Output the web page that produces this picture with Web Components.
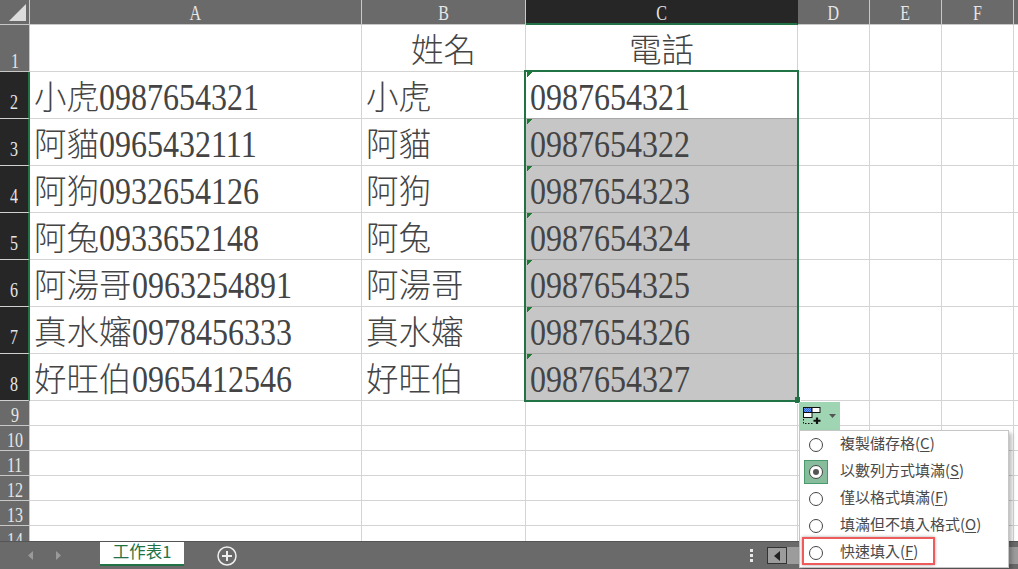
<!DOCTYPE html>
<html>
<head>
<meta charset="utf-8">
<style>
  html, body { margin: 0; height: 100%; overflow: hidden; }
</style>
</head>
<body>
<excel-window></excel-window>

<script>
const SERIF = `"Liberation Serif", "Noto Sans CJK TC", serif`;
const COLS = [
  { name: "A", width: 332 },
  { name: "B", width: 164 },
  { name: "C", width: 272, on: true },
  { name: "D", width: 72 },
  { name: "E", width: 72 },
  { name: "F", width: 72 },
  { name: "", width: 20 }
];
const ROWS = [
  ["", "姓名", "電話"],
  ["小虎0987654321", "小虎", "0987654321"],
  ["阿貓0965432111", "阿貓", "0987654322"],
  ["阿狗0932654126", "阿狗", "0987654323"],
  ["阿兔0933652148", "阿兔", "0987654324"],
  ["阿湯哥0963254891", "阿湯哥", "0987654325"],
  ["真水嬸0978456333", "真水嬸", "0987654326"],
  ["好旺伯0965412546", "好旺伯", "0987654327"]
];

// digits are taller and narrower in the reference, so squeeze them
const digits = s => s.replace(/\d+/, m => `<span class="dg" style="width:${m.length * 16}px">${m}</span>`);

class SheetGrid extends HTMLElement {
  connectedCallback() {
    this.attachShadow({ mode: "open" });
    let html = `<div class="hd corner"><svg width="29" height="24" viewBox="0 0 29 24"><path d="M26 4V21H9Z" fill="#dcdcdc"/></svg></div>`;
    COLS.forEach(c => {
      html += `<div class="hd col ${c.on ? "on" : ""}"><span>${c.name}</span></div>`;
    });
    for (let r = 1; r <= 14; r++) {
      const data = ROWS[r - 1];
      const on = r >= 2 && r <= 8;
      html += `<div class="hd num ${on ? "on" : ""}"><span>${r}</span></div>`;
      COLS.forEach((c, i) => {
        let cls = "cell";
        const txt = data && data[i] ? data[i] : "";
        if (r == 1 && i > 0 && i < 3) cls += " mid";
        if (i == 2 && on) cls += " tri";
        if (i == 2 && r >= 2 && on) cls += " line";
        if (i == 2 && r > 2 && on) cls += " gray";
        html += `<div class="${cls}">${digits(txt)}</div>`;
      });
    }
    this.shadowRoot.innerHTML = `
      <style>
        :host { display: block; position: relative; flex: 1; overflow: hidden; background: #fff; }
        .grid {
          display: grid;
          grid-template-columns: 30px ${COLS.map(c => c.width + "px").join(" ")};
          grid-template-rows: 25px repeat(8, 47px) repeat(6, 25px);
          font-family: ${SERIF};
        }
        .hd {
          box-sizing: border-box;
          background: #6a6a6a;
          color: #e6e6e6;
          font-size: 20px;
          line-height: 20px;
          display: flex;
          justify-content: center;
          align-items: flex-end;
          border-right: 1px solid #c8c8c8;
          border-bottom: 1px solid #c8c8c8;
          padding-bottom: 0;
        }
        .hd span { display: inline-block; transform: scaleX(.8); }
        .corner { padding: 0; display: block; }
        .corner svg { display: block; }
        .col { align-items: center; padding: 2px 0 0; }
        .col.on { background: #262626; border-right-color: #262626; border-bottom: 2px solid #217346; }
        .num.on { background: #262626; border-right: 2px solid #217346; border-bottom-color: #d0d0d0; padding-bottom: 6px; }
        .cell {
          box-sizing: border-box;
          border-right: 1px solid #d4d4d4;
          border-bottom: 1px solid #d4d4d4;
          font-size: 32.5px;
          font-weight: 300;
          line-height: 40px;
          color: #444;
          padding: 0 4px 0 4px;
          display: flex;
          align-items: flex-end;
          white-space: nowrap;
          overflow: hidden;
        }
        .dg {
          display: inline-block;
          font-size: 37px;
          transform: scaleX(.865);
          transform-origin: left center;
        }
        .mid { justify-content: center; }
        .tri { background: linear-gradient(135deg, #1e7b34 0 3.6px, transparent 3.6px) 1px 0 / 6px 6px no-repeat; }
        .line { border-bottom-color: #a8a8a8; }
        .gray {
          background: linear-gradient(135deg, #1e7b34 0 3.6px, transparent 3.6px) 1px 0 / 6px 6px no-repeat, #c6c6c6;
          border-right-color: #fff;
        }
        .sel {
          position: absolute;
          left: 524px;
          top: 70px;
          width: 275px;
          height: 332px;
          box-sizing: border-box;
          border: 2px solid #217346;
        }
        .handle {
          position: absolute;
          left: 795px;
          top: 397px;
          width: 5px;
          height: 6px;
          background: #217346;
          box-shadow: 1px 1px 0 #fff;
        }
      </style>
      <div class="grid">${html}</div>
      <div class="sel"></div>
      <div class="handle"></div>`;
  }
}

class FillMenu extends HTMLElement {
  connectedCallback() {
    this.attachShadow({ mode: "open" });
    const items = [
      ["複製儲存格", "C"],
      ["以數列方式填滿", "S", true],
      ["僅以格式填滿", "F"],
      ["填滿但不填入格式", "O"],
      ["快速填入", "F"]
    ];
    this.shadowRoot.innerHTML = `
      <style>
        :host { position: absolute; left: 799px; top: 402px; display: block; font-family: "Noto Sans CJK TC", "Liberation Sans", sans-serif; }
        .btn {
          width: 41px; height: 28px; background: #a0d5b3;
          display: flex; align-items: center; gap: 8px; padding-left: 3px; box-sizing: border-box;
        }
        .btn svg { display: block; }
        .list {
          width: 210px; height: 138px; box-sizing: border-box;
          background: #fff; border: 1px solid #c6c6c6;
          box-shadow: 3px 3px 4px rgba(0,0,0,.25);
          display: flex; flex-direction: column;
        }
        .item { height: 27px; flex: none; display: flex; align-items: center; font-size: 15px; color: #4a4a4a; }
        .label { position: relative; top: -2px; }
        .radio {
          width: 24px; height: 24px; margin: 0 12px 0 4px; box-sizing: border-box;
          display: flex; align-items: center; justify-content: center; flex: none;
        }
        .radio i {
          width: 14px; height: 14px; border: 1.3px solid #444; border-radius: 50%; box-sizing: border-box;
          background: #fff; display: flex; align-items: center; justify-content: center;
        }
        .checked .radio { background: #87bd9c; border: 1px solid #4a9a6c; }
        .checked .radio i::after { content: ""; width: 6px; height: 6px; border-radius: 50%; background: #555; }
        u { text-underline-offset: 2px; }
        .mark {
          position: absolute; left: 3px; top: 135px; width: 133px; height: 28px; box-sizing: border-box;
          border: 2px solid #ef5a5a; box-shadow: 0 0 3px rgba(0,0,0,.35);
        }
      </style>
      <div class="btn">
        <svg width="18" height="18" viewBox="0 0 18 18" style="margin-left:1px">
          <defs>
            <pattern id="dith" width="2" height="2" patternUnits="userSpaceOnUse">
              <rect width="2" height="2" fill="#2a62e8"/><rect width="1" height="1" fill="#6f9cf5"/><rect x="1" y="1" width="1" height="1" fill="#6f9cf5"/>
            </pattern>
          </defs>
          <rect x=".5" y=".5" width="8.500" height="5" fill="url(#dith)" stroke="#111"/>
          <rect x="9" y=".5" width="8" height="5" fill="#fff" stroke="#111"/>
          <rect x=".5" y="5.500" width="8.500" height="5" fill="#fff" stroke="#111"/>
          <path d="M.5 12v4.500h9" fill="none" stroke="#111" stroke-dasharray="1.500 1.500"/>
          <path d="M14 10.500v6.500M10.500 13.750h7" stroke="#111" stroke-width="2.200"/>
        </svg>
        <svg width="7" height="4" viewBox="0 0 7 4"><path d="M0 0H7L3.500 4Z" fill="#555"/></svg>
      </div>
      <div class="list">
        ${items.map(([t, k, c]) => `<div class="item ${c ? "checked" : ""}"><span class="radio"><i></i></span><span class="label">${t}(<u>${k}</u>)</span></div>`).join("")}
      </div>
      <div class="mark"></div>`;
  }
}

class TabBar extends HTMLElement {
  connectedCallback() {
    this.attachShadow({ mode: "open" });
    this.shadowRoot.innerHTML = `
      <style>
        :host {
          display: flex; height: 28px; flex: none; background: #6a6a6a; border-top: 1px solid #555;
          box-sizing: border-box; align-items: flex-start;
          font-family: "Noto Sans CJK TC", "Liberation Sans", sans-serif;
        }
        .nav { width: 100px; display: flex; align-items: center; gap: 23px; height: 27px; padding-left: 28px; box-sizing: border-box; }
        .nav svg { display: block; }
        .tab {
          width: 84px; height: 24px; box-sizing: border-box; background: #fff; color: #217346;
          border-bottom: 2px solid #217346; font-size: 16.5px; line-height: 18px; text-align: center;
        }
        .add { margin: 4px 0 0 33px; display: block; }
        .right { margin-left: auto; display: flex; align-items: flex-start; }
        .dots { margin: 7px 14px 0 0; display: flex; flex-direction: column; gap: 2px; }
        .dots i { width: 3px; height: 3px; background: #e8e8e8; display: block; }
        .arrow {
          width: 20px; height: 17px; box-sizing: border-box; margin-top: 5px; background: #9c9c9c;
          border: 1px solid #333; display: flex; align-items: center; justify-content: center;
        }
        .track { width: 231px; height: 17px; margin-top: 5px; background: #9c9c9c; }
      </style>
      <div class="nav">
        <svg width="5" height="9" viewBox="0 0 5 9"><path d="M5 0V9L0 4.500Z" fill="#9a9a9a"/></svg>
        <svg width="5" height="9" viewBox="0 0 5 9"><path d="M0 0V9L5 4.500Z" fill="#9a9a9a"/></svg>
      </div>
      <div class="tab">工作表1</div>
      <svg class="add" width="20" height="20" viewBox="0 0 20 20"><circle cx="10" cy="10" r="9" fill="none" stroke="#eee" stroke-width="1.500"/><path d="M10 5v10M5 10h10" stroke="#eee" stroke-width="2"/></svg>
      <div class="right">
        <div class="dots"><i></i><i></i><i></i></div>
        <div class="arrow"><svg width="6" height="10" viewBox="0 0 6 10"><path d="M6 0V10L0 5Z" fill="#222"/></svg></div>
        <div class="track"></div>
      </div>`;
  }
}

class ExcelWindow extends HTMLElement {
  connectedCallback() {
    this.attachShadow({ mode: "open" });
    this.shadowRoot.innerHTML = `
      <style>
        :host { display: flex; flex-direction: column; height: 569px; width: 1018px; position: relative; overflow: hidden; }
      </style>
      <sheet-grid></sheet-grid>
      <tab-bar></tab-bar>
      <fill-menu></fill-menu>`;
  }
}

customElements.define("sheet-grid", SheetGrid);
customElements.define("fill-menu", FillMenu);
customElements.define("tab-bar", TabBar);
customElements.define("excel-window", ExcelWindow);
</script>
</body>
</html>
